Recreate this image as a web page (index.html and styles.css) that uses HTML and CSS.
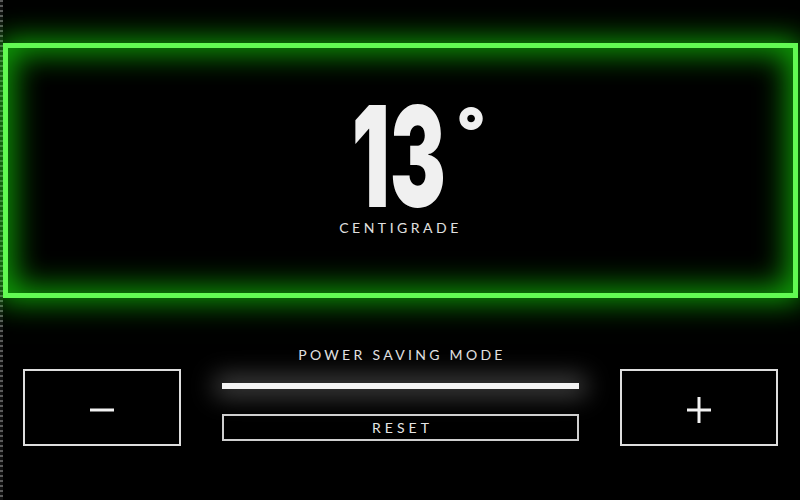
FILE: index.html
```html
<!DOCTYPE html>
<html lang="en">
<head>
<meta charset="utf-8">
<title>Thermostat</title>
<link rel="stylesheet" href="styles.css">
</head>
<body>
  <main class="app">
    <section class="display">
      <div class="temp"><span class="temp-num">13<span class="deg">°</span></span></div>
      <div class="unit">CENTIGRADE</div>
    </section>
    <section class="controls">
      <button class="step-btn" aria-label="Decrease">
        <svg width="24" height="26" viewBox="0 0 24 26"><rect x="0" y="11.5" width="24" height="3" fill="#f2f2f2"/></svg>
      </button>
      <div class="center">
        <div class="mode-label">POWER SAVING MODE</div>
        <div class="slider"></div>
        <button class="reset-btn">RESET</button>
      </div>
      <button class="step-btn" aria-label="Increase">
        <svg width="24" height="26" viewBox="0 0 24 26"><rect x="0" y="11.5" width="24" height="3" fill="#f2f2f2"/><rect x="10.5" y="0" width="3" height="26" fill="#f2f2f2"/></svg>
      </button>
    </section>
  </main>
</body>
</html>
```

FILE: styles.css
```css
html {
  background: #000;
}
body {
  margin: 0;
  height: 500px;
  background: repeating-linear-gradient(to bottom, #5a5a5a 0 2px, #111 2px 5px) left top / 3px 100% no-repeat, #000;
  overflow: hidden;
  font-family: "Lato", "Open Sans", sans-serif;
  color: #e6e6e6;
}
.app {
  padding-top: 43px;
}
.display {
  box-sizing: border-box;
  height: 255px;
  margin: 0 2px 0 3px;
  border: 5px solid #62fa52;
  box-shadow: 0 0 28px 4px rgba(20, 210, 10, 0.75), inset 0 0 30px 6px rgba(20, 210, 10, 0.75);
  padding-top: 48px;
  display: flex;
  flex-direction: column;
  align-items: center;
}
.temp {
  height: 120px;
  line-height: 120px;
  font-family: "Inter", "Roboto", sans-serif;
  font-weight: 900;
  font-size: 140px;
  color: #f0f0f0;
  text-align: center;
  padding-left: 30px;
}
.temp-num {
  display: inline-block;
  transform: scaleX(0.6);
  transform-origin: center;
}
.deg {
  display: inline-block;
  vertical-align: top;
  font-size: 64px;
  line-height: 64px;
  margin-top: 3px;
  margin-left: 27px;
  transform: scaleX(1.667);
}
.unit {
  margin-top: 4px;
  font-size: 14px;
  line-height: 16px;
  letter-spacing: 3.5px;
  color: #e0e0e0;
}
.controls {
  margin-top: 49px;
  padding: 0 22px 0 23px;
  display: grid;
  grid-template-columns: 158px 1fr 158px;
  column-gap: 41px;
  align-items: start;
}
.step-btn {
  box-sizing: border-box;
  margin-top: 22px;
  height: 77px;
  background: transparent;
  border: 2px solid #dedede;
  padding: 5px 0 0;
  display: flex;
  align-items: center;
  justify-content: center;
}
.step-btn svg {
  display: block;
}
.center {
  display: flex;
  flex-direction: column;
  align-items: stretch;
}
.mode-label {
  font-size: 14px;
  line-height: 16px;
  letter-spacing: 3.3px;
  padding-left: 3px;
  text-align: center;
  color: #e0e0e0;
}
.slider {
  margin-top: 20px;
  height: 6px;
  background: #f4f4f4;
  box-shadow: 0 0 24px 7px rgba(255, 255, 255, 0.28);
}
.reset-btn {
  box-sizing: border-box;
  margin-top: 25px;
  height: 27px;
  background: transparent;
  border: 2px solid #cfcfcf;
  font-family: "Lato", "Open Sans", sans-serif;
  font-size: 14px;
  line-height: 23px;
  letter-spacing: 4px;
  padding: 0 0 0 4px;
  color: #e6e6e6;
  text-align: center;
}
```
